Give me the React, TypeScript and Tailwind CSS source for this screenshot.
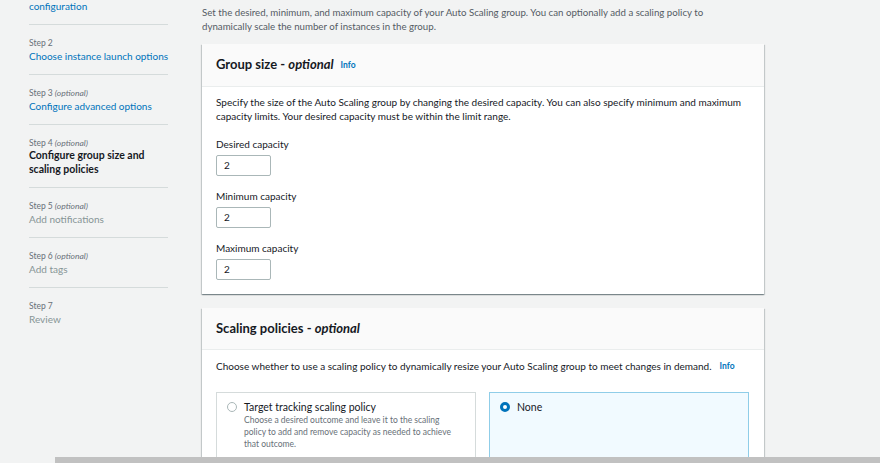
const font = { fontFamily: "Lato, 'Noto Sans', sans-serif" };

type Step = { label: string; optional?: boolean; title: string[]; state: "link" | "current" | "off" };

const steps: Step[] = [
  { label: "Step 2", title: ["Choose instance launch options"], state: "link" },
  { label: "Step 3", optional: true, title: ["Configure advanced options"], state: "link" },
  { label: "Step 4", optional: true, title: ["Configure group size and", "scaling policies"], state: "current" },
  { label: "Step 5", optional: true, title: ["Add notifications"], state: "off" },
  { label: "Step 6", optional: true, title: ["Add tags"], state: "off" },
  { label: "Step 7", title: ["Review"], state: "off" },
];

const Nav = () => (
  <nav className="w-[139px] ml-[29px] shrink-0">
    <div className="-mt-px pb-[11px] text-[10px] leading-[14px] text-[#0073bb]">configuration</div>
    {steps.map((s) => (
      <div key={s.label} className="border-t border-[#d5dbdb] pt-[12px] pb-[11px]">
        <div className="text-[8.5px] leading-[12px] text-[#687078]">
          {s.label}
          {s.optional && <i> (optional)</i>}
        </div>
        {s.title.map((t) => (
          <div
            key={t}
            className={
              "whitespace-nowrap " +
              (s.state === "link"
                ? "text-[10px] leading-[14px] text-[#0073bb]"
                : s.state === "current"
                ? "text-[10.5px] leading-[13.5px] text-[#16191f] font-bold"
                : "text-[10px] leading-[14px] text-[#879596]")
            }
          >
            {t}
          </div>
        ))}
      </div>
    ))}
  </nav>
);

const Field = ({ label }: { label: string }) => (
  <div className="flex flex-col">
    <div className="text-[10px] leading-[14px] text-[#16191f]">{label}</div>
    <div className="mt-[4px] w-[55px] h-[21px] border border-[#aab7b8] rounded-[2px] bg-white flex items-center pl-[7px] text-[10px] text-[#16191f]">
      2
    </div>
  </div>
);

const cardCls =
  "bg-white shadow-[0_1px_1px_0_rgba(0,28,36,0.3),1px_1px_1px_0_rgba(0,28,36,0.15),-1px_1px_1px_0_rgba(0,28,36,0.15)]";

export default function App() {
  return (
    <div style={font} className="relative w-[880px] h-[463px] overflow-hidden bg-[#f2f3f3] flex">
      <Nav />
      <main className="ml-[34px] w-[562px] shrink-0 pt-[5px]">
        <p className="w-[530px] text-[9.7px] leading-[14px] text-[#545b64]">
          Set the desired, minimum, and maximum capacity of your Auto Scaling group. You can optionally add a scaling policy to
          dynamically scale the number of instances in the group.
        </p>

        <section className={"mt-[11px] " + cardCls}>
          <div className="h-[43px] bg-[#fafafa] border-b border-[#eaeded] px-[14px] flex items-center gap-[7px]">
            <h2 className="text-[13px] font-bold text-[#16191f]">
              Group size - <i>optional</i>
            </h2>
            <span className="text-[8.5px] font-bold text-[#0073bb] mt-[1px]">Info</span>
          </div>
          <div className="px-[14px] pt-[8px] pb-[14px]">
            <p className="text-[10px] leading-[14px] text-[#16191f]">
              Specify the size of the Auto Scaling group by changing the desired capacity. You can also specify minimum and maximum
              capacity limits. Your desired capacity must be within the limit range.
            </p>
            <div className="mt-[14px] flex flex-col gap-[13px]">
              <Field label="Desired capacity" />
              <Field label="Minimum capacity" />
              <Field label="Maximum capacity" />
            </div>
          </div>
        </section>

        <section className={"mt-[14px] " + cardCls}>
          <div className="h-[42px] bg-[#fafafa] border-b border-[#eaeded] px-[14px] flex items-center">
            <h2 className="text-[13px] font-bold text-[#16191f]">
              Scaling policies - <i>optional</i>
            </h2>
          </div>
          <div className="px-[14px] pt-[9px]">
            <p className="text-[10px] leading-[14px] text-[#16191f] flex items-center gap-[8px]">
              Choose whether to use a scaling policy to dynamically resize your Auto Scaling group to meet changes in demand.
              <span className="text-[8.5px] font-bold text-[#0073bb]">Info</span>
            </p>
            <div className="mt-[19px] flex gap-[13px]">
              <div className="w-[260px] h-[90px] border border-[#d5dbdb] bg-white pl-[10px] pt-[7px] flex gap-[7px]">
                <span className="mt-[2px] w-[10px] h-[10px] rounded-full border border-[#aab7b8] bg-white shrink-0" />
                <div>
                  <div className="text-[10.5px] leading-[14px] text-[#16191f]">Target tracking scaling policy</div>
                  <div className="text-[8.5px] leading-[12px] text-[#687078] w-[214px]">
                    Choose a desired outcome and leave it to the scaling policy to add and remove capacity as needed to achieve
                    that outcome.
                  </div>
                </div>
              </div>
              <div className="w-[260px] h-[90px] border border-[#8fcde8] bg-[#f1faff] pl-[10px] pt-[7px] flex gap-[7px]">
                <span className="mt-[2px] w-[10px] h-[10px] rounded-full border-[3px] border-[#0073bb] bg-white shrink-0" />
                <div className="text-[10.5px] leading-[14px] text-[#16191f]">None</div>
              </div>
            </div>
          </div>
        </section>
      </main>
      <div className="absolute bottom-0 left-[55px] right-0 h-[6px] bg-[#c1c1c1]" />
    </div>
  );
}
